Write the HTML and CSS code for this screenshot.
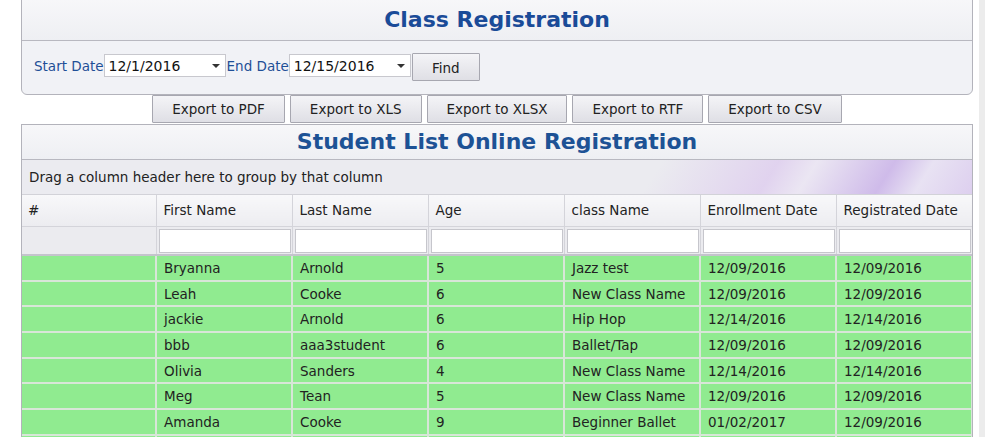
FILE: index.html
```html
<!DOCTYPE html>
<html>
<head>
<meta charset="utf-8">
<link rel="stylesheet" href="styles.css">
</head>
<body>
<div class="layout">
  <div class="main">
    <div class="panel">
      <div class="panel-title">Class Registration</div>
      <div class="filters">
        <span class="label">Start Date</span>
        <span class="picker"><span class="picker-text">12/1/2016</span><span class="caret"></span></span>
        <span class="label">End Date</span>
        <span class="picker"><span class="picker-text">12/15/2016</span><span class="caret"></span></span>
        <button class="btn find">Find</button>
      </div>
    </div>
    <div class="exports">
      <button class="btn export">Export to PDF</button>
      <button class="btn export">Export to XLS</button>
      <button class="btn export">Export to XLSX</button>
      <button class="btn export">Export to RTF</button>
      <button class="btn export">Export to CSV</button>
    </div>
    <div class="grid">
      <div class="grid-title">Student List Online Registration</div>
      <div class="group-panel">Drag a column header here to group by that column</div>
      <table class="table">
        <thead>
          <tr class="head">
            <th>#</th><th>First Name</th><th>Last Name</th><th>Age</th><th>class Name</th><th>Enrollment Date</th><th>Registrated Date</th>
          </tr>
          <tr class="filter-row">
            <td></td>
            <td><span class="cell-input"></span></td>
            <td><span class="cell-input"></span></td>
            <td><span class="cell-input"></span></td>
            <td><span class="cell-input"></span></td>
            <td><span class="cell-input"></span></td>
            <td><span class="cell-input"></span></td>
          </tr>
        </thead>
        <tbody>
          <tr><td></td><td>Bryanna</td><td>Arnold</td><td>5</td><td>Jazz test</td><td>12/09/2016</td><td>12/09/2016</td></tr>
          <tr><td></td><td>Leah</td><td>Cooke</td><td>6</td><td>New Class Name</td><td>12/09/2016</td><td>12/09/2016</td></tr>
          <tr><td></td><td>jackie</td><td>Arnold</td><td>6</td><td>Hip Hop</td><td>12/14/2016</td><td>12/14/2016</td></tr>
          <tr><td></td><td>bbb</td><td>aaa3student</td><td>6</td><td>Ballet/Tap</td><td>12/09/2016</td><td>12/09/2016</td></tr>
          <tr><td></td><td>Olivia</td><td>Sanders</td><td>4</td><td>New Class Name</td><td>12/14/2016</td><td>12/14/2016</td></tr>
          <tr><td></td><td>Meg</td><td>Tean</td><td>5</td><td>New Class Name</td><td>12/09/2016</td><td>12/09/2016</td></tr>
          <tr><td></td><td>Amanda</td><td>Cooke</td><td>9</td><td>Beginner Ballet</td><td>01/02/2017</td><td>12/09/2016</td></tr>
          <tr><td></td><td></td><td></td><td></td><td></td><td></td><td></td></tr>
        </tbody>
      </table>
    </div>
  </div>
  <div class="scrollstrip"></div>
</div>
</body>
</html>
```
FILE: styles.css
```css
html, body {
  margin: 0;
  padding: 0;
  background: #ffffff;
  overflow: hidden;
}
body {
  font-family: "DejaVu Sans", Verdana, sans-serif;
  font-size: 13.5px;
  color: #222;
}
.layout {
  display: flex;
  height: 437px;
  padding-left: 21px;
}
.main {
  width: 952px;
  display: flex;
  flex-direction: column;
}
.scrollstrip {
  width: 6px;
  margin-left: 6px;
  background: #ececec;
  height: 437px;
}
.panel {
  margin-top: -6px;
  border: 1px solid #b3b3bb;
  border-radius: 6px;
  background: #f1f2f6;
  height: 101px;
  box-sizing: border-box;
}
.panel-title {
  height: 46px;
  box-sizing: border-box;
  border-bottom: 1px solid #b8b8c0;
  background: linear-gradient(#f8f8fa, #eeeff3);
  border-radius: 6px 6px 0 0;
  text-align: center;
  color: #1a4b98;
  font-weight: bold;
  font-size: 22px;
  padding-top: 12px;
}
.filters {
  display: flex;
  align-items: flex-start;
  padding: 12px 0 0 12px;
}
.label {
  color: #1f4f97;
  line-height: 23px;
  margin-top: 2px;
}
.picker {
  display: flex;
  align-items: center;
  width: 122px;
  height: 23px;
  box-sizing: border-box;
  background: #fff;
  border: 1px solid #c8c8ce;
  margin: 1px 1px 0 0;
  padding-left: 4px;
  color: #111;
  font-size: 14px;
}
.picker-text {
  flex: 1;
}
.caret {
  width: 0;
  height: 0;
  border-left: 4px solid transparent;
  border-right: 4px solid transparent;
  border-top: 4px solid #333;
  margin-right: 5px;
}
.btn {
  font-family: "DejaVu Sans", Verdana, sans-serif;
  font-size: 13.5px;
  color: #222;
  background: linear-gradient(#f4f4f7, #dfdfe5);
  border: 1px solid #a7a7b0;
  border-radius: 1px;
  padding: 0;
  margin: 0;
  cursor: default;
}
.find {
  width: 68px;
  height: 28px;
  margin-left: 0;
  padding-top: 2px;
}
.exports {
  display: flex;
  justify-content: center;
  gap: 5px;
  height: 29px;
  box-sizing: border-box;
}
.export {
  height: 28px;
  padding: 0 19px;
}
.grid {
  border: 1px solid #b3b3bb;
  border-bottom: none;
  background: #f1f2f6;
  flex: 1;
  overflow: hidden;
}
.grid-title {
  height: 35px;
  box-sizing: border-box;
  border-bottom: 1px solid #b8b8c0;
  background: linear-gradient(#f7f7f9, #eeeff3);
  text-align: center;
  color: #1d5295;
  font-weight: bold;
  font-size: 22px;
  padding-top: 4px;
}
.group-panel {
  height: 35px;
  box-sizing: border-box;
  border-bottom: 1px solid #d2d2d8;
  padding: 9px 0 0 7px;
  color: #222;
  background:
    linear-gradient(122deg, transparent 0%, transparent 62%, rgba(220, 200, 235, 0.0) 66%, rgba(220, 200, 238, 0.7) 78%, rgba(235, 225, 245, 0.5) 82%, rgba(200, 175, 232, 0.8) 90%, rgba(230, 220, 245, 0.6) 94%, rgba(215, 195, 238, 0.7) 100%),
    #ebebf0;
}
.table {
  border-collapse: collapse;
  table-layout: fixed;
  width: 950px;
}
.table th, .table td {
  width: 136px;
  box-sizing: border-box;
  text-align: left;
  font-weight: normal;
  white-space: nowrap;
  overflow: hidden;
  padding: 0 0 0 7px;
}
.table .head th:first-child {
  width: 134px;
}
.head th {
  height: 31px;
  background: linear-gradient(#f8f8fa, #ececf0);
  border-right: 1px solid #d4d4da;
  border-bottom: 1px solid #d4d4da;
  color: #222;
  padding-top: 0;
}
.head th:first-child {
  padding-left: 6px;
}
.filter-row td {
  height: 29px;
  background: #ebebef;
  border-right: 1px solid #d4d4da;
  border-bottom: 2px solid #c4c4cc;
  padding: 0 1px 0 2px;
}
.cell-input {
  display: block;
  height: 24px;
  box-sizing: border-box;
  background: #fff;
  border: 1px solid #c6c6cc;
  margin-top: 1px;
}
tbody td {
  height: 25.7px;
  background: #90eb90;
  border-right: 2px solid #d8e6d8;
  border-bottom: 2px solid #d8e6d8;
  color: #222;
  padding-left: 9px;
  padding-top: 2px;
}
```
